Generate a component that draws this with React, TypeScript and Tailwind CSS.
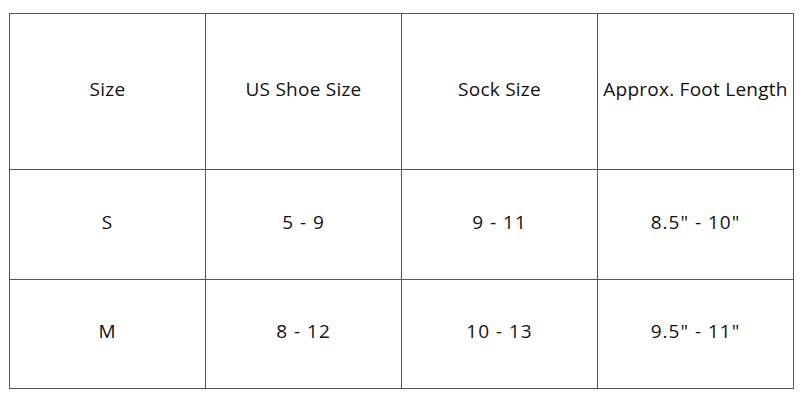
import React from 'react';

const headers = ['Size', 'US Shoe Size', 'Sock Size', 'Approx. Foot Length'];

const rows = [
  ['S', '5 - 9', '9 - 11', '8.5" - 10"'],
  ['M', '8 - 12', '10 - 13', '9.5" - 11"'],
];

export default function App() {
  return (
    <div className="w-[800px] h-[400px] bg-white pt-[13px] pl-[9px]" style={{ fontFamily: '"Open Sans", "DejaVu Sans", sans-serif' }}>
      <table className="border-collapse text-[19px] leading-[24px] tracking-[0.25px] text-[#111]">
        <tbody>
          <tr className="h-[156px]">
            {headers.map((h) => (
              <td key={h} className="border border-[#555] text-center align-middle w-[196px] p-0 pb-[6px]">
                {h}
              </td>
            ))}
          </tr>
          {rows.map((r, i) => (
            <tr key={i} className={i === 0 ? 'h-[110px]' : 'h-[109px]'}>
              {r.map((c, j) => (
                <td key={j} className="border border-[#555] text-center align-middle p-0 pb-[6px] tracking-[1px]">
                  {c}
                </td>
              ))}
            </tr>
          ))}
        </tbody>
      </table>
    </div>
  );
}
